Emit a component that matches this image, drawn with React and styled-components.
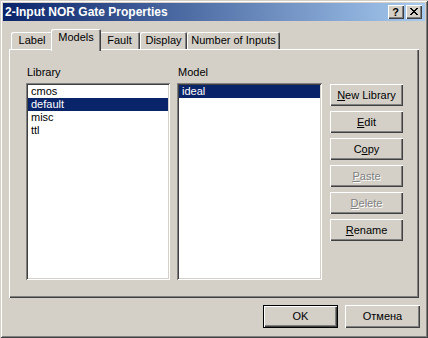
import React from 'react'
import styled, { createGlobalStyle, css } from 'styled-components'

const face = '#d4d0c8'
const shadow = '#808080'
const dark = '#404040'

const GlobalStyle = createGlobalStyle`
  html, body {
    margin: 0;
    padding: 0;
    background: ${face};
  }
  body {
    font-family: "Liberation Sans", Arial, sans-serif;
    font-size: 11px;
    color: #000;
  }
`

const raised = css`
  box-shadow: inset 1px 1px #fff, inset -1px -1px ${dark}, inset -2px -2px ${shadow};
`

const Window = styled.div`
  width: 428px;
  height: 338px;
  box-sizing: border-box;
  padding: 3px;
  background: ${face};
  display: flex;
  flex-direction: column;
  box-shadow: inset 1px 1px ${face}, inset -1px -1px ${dark}, inset 2px 2px #fff, inset -2px -2px ${shadow};
`

const TitleBar = styled.div`
  height: 18px;
  display: flex;
  align-items: center;
  padding: 0 3px 0 2px;
  background: linear-gradient(to right, #0a246a, #a6caf0);
`

const Title = styled.div`
  flex: 1;
  color: #fff;
  font-weight: bold;
  font-size: 12px;
  line-height: 18px;
  white-space: nowrap;
`

const CaptionButtons = styled.div`
  display: flex;
  gap: 2px;
`

const CaptionButton = styled.div`
  width: 16px;
  height: 14px;
  box-sizing: border-box;
  background: ${face};
  ${raised};
  display: flex;
  align-items: center;
  justify-content: center;
  font-weight: bold;
  font-size: 11px;
  line-height: 14px;
  padding: 0 1px 1px 0;
`

const TabStrip = styled.div`
  display: flex;
  align-items: flex-end;
  height: 20px;
  margin: 8px 6px 0;
  padding-left: 2px;
`

const Tab = styled.div`
  width: ${p => p.$w}px;
  height: 17px;
  box-sizing: border-box;
  padding-top: 2px;
  text-align: center;
  line-height: 13px;
  white-space: nowrap;
  background: ${face};
  border-radius: 2px 2px 0 0;
  box-shadow: inset 1px 1px #fff, inset -1px 0 ${dark}, inset -2px 0 ${shadow};

  ${p => p.$active && css`
    position: relative;
    z-index: 1;
    height: 22px;
    width: ${p.$w + 4}px;
    margin: 0 -2px -2px;
  `}
`

const Panel = styled.div`
  height: 249px;
  margin: 0 6px;
  box-sizing: border-box;
  padding: 17px 0 0 17px;
  display: flex;
  gap: 7px;
  box-shadow: inset 1px 1px #fff, inset -1px -1px ${dark}, inset -2px -2px ${shadow};
`

const Column = styled.div`
  width: ${p => p.$w}px;
  display: flex;
  flex-direction: column;
  gap: 4px;
`

const FieldLabel = styled.div`
  line-height: 13px;
  padding-left: 1px;
`

const ListBox = styled.div`
  height: 197px;
  box-sizing: border-box;
  background: #fff;
  padding: 2px;
  box-shadow: inset 1px 1px ${shadow}, inset -1px -1px #fff, inset 2px 2px ${dark}, inset -2px -2px ${face};
`

const ListItem = styled.div`
  height: 13px;
  line-height: 13px;
  padding-left: 3px;
  white-space: nowrap;
  ${p => p.$selected && css`
    background: #0a246a;
    color: #fff;
  `}
`

const ButtonColumn = styled.div`
  margin-left: 1px;
  padding-top: 18px;
  display: flex;
  flex-direction: column;
  gap: 5px;
`

const Button = styled.div`
  width: ${p => p.$w || 73}px;
  height: ${p => p.$h || 22}px;
  box-sizing: border-box;
  background: ${face};
  ${raised};
  display: flex;
  align-items: center;
  justify-content: center;
  white-space: nowrap;
  padding-bottom: 1px;
  color: ${p => (p.$disabled ? shadow : '#000')};
  text-shadow: ${p => (p.$disabled ? '1px 1px 0 #fff' : 'none')};
  ${p => p.$default && css`
    box-shadow: inset 0 0 0 1px #000, inset 2px 2px #fff, inset -2px -2px ${dark}, inset -3px -3px ${shadow};
  `}
`

const Footer = styled.div`
  display: flex;
  justify-content: flex-end;
  gap: 7px;
  margin-top: 7px;
  padding-right: 5px;
`

const CloseGlyph = () => (
  <svg width="8" height="7" viewBox="0 0 8 7" shapeRendering="crispEdges">
    <path d="M0 0h2v1h1v1h2v-1h1v-1h2v1h-1v1h-1v1h-1v1h1v1h1v1h1v1h-2v-1h-1v-1h-2v1h-1v1h-2v-1h1v-1h1v-1h1v-1h-1v-1h-1v-1h-1z" fill="#000" />
  </svg>
)

const Key = styled.span`
  text-decoration: underline;
`

const tabs = [
  { label: 'Label', w: 42 },
  { label: 'Models', w: 46, active: true },
  { label: 'Fault', w: 41 },
  { label: 'Display', w: 47 },
  { label: 'Number of Inputs', w: 93 },
]

const libraries = ['cmos', 'default', 'misc', 'ttl']

const App = () => {
  return (
    <Window>
      <GlobalStyle />
      <TitleBar>
        <Title>2-Input NOR Gate Properties</Title>
        <CaptionButtons>
          <CaptionButton>?</CaptionButton>
          <CaptionButton><CloseGlyph /></CaptionButton>
        </CaptionButtons>
      </TitleBar>

      <TabStrip>
        {tabs.map(t => (
          <Tab key={t.label} $w={t.w} $active={t.active}>{t.label}</Tab>
        ))}
      </TabStrip>

      <Panel>
        <Column $w={144}>
          <FieldLabel>Library</FieldLabel>
          <ListBox>
            {libraries.map(l => (
              <ListItem key={l} $selected={l === 'default'}>{l}</ListItem>
            ))}
          </ListBox>
        </Column>
        <Column $w={145}>
          <FieldLabel>Model</FieldLabel>
          <ListBox>
            <ListItem $selected>ideal</ListItem>
          </ListBox>
        </Column>
        <ButtonColumn>
          <Button><Key>N</Key>ew Library</Button>
          <Button><Key>E</Key>dit</Button>
          <Button>C<Key>o</Key>py</Button>
          <Button $disabled><Key>P</Key>aste</Button>
          <Button $disabled><Key>D</Key>elete</Button>
          <Button><Key>R</Key>ename</Button>
        </ButtonColumn>
      </Panel>

      <Footer>
        <Button $w={75} $h={23} $default>OK</Button>
        <Button $w={75} $h={23}>Отмена</Button>
      </Footer>
    </Window>
  )
}

export default App
